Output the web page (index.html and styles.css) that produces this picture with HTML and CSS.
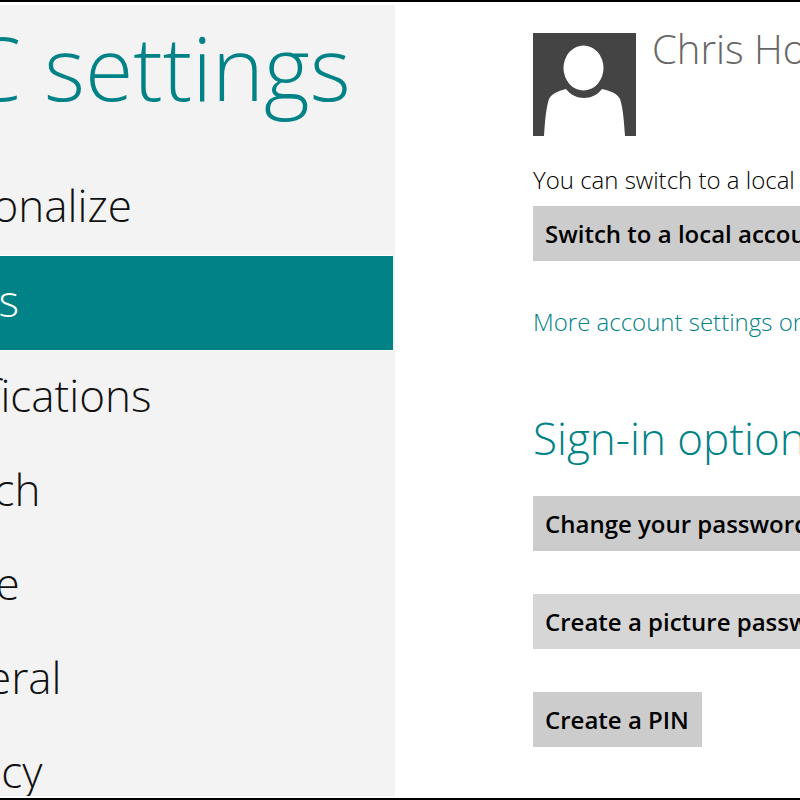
FILE: index.html
```
<!DOCTYPE html>
<html lang="en">
<head>
<meta charset="utf-8">
<title>PC settings</title>
<link rel="stylesheet" href="styles.css">
</head>
<body>
<div class="screen">
  <aside class="sidebar">
    <h1 class="title">PC settings</h1>
    <nav class="nav">
      <a class="item" href="#personalize">Personalize</a>
      <a class="item active" href="#users" aria-current="page">Users</a>
      <a class="item" href="#notifications">Notifications</a>
      <a class="item" href="#search">Search</a>
      <a class="item" href="#share">Share</a>
      <a class="item" href="#general">General</a>
      <a class="item" href="#privacy">Privacy</a>
    </nav>
  </aside>
  <main class="content">
    <section class="account">
      <div class="profile">
        <svg class="avatar" viewBox="0 0 103 103" aria-hidden="true">
          <path fill="#444" d="M0 0H103V103H92C91 88 90 75 87 66C84 60 77 58 69 56C60 68 42 68 33 56C26 58 19 60 16 66C13 75 12 88 11 103H0Z"/>
          <ellipse cx="50.500" cy="35" rx="20" ry="22.500" fill="#fff"/>
        </svg>
        <p class="name">Chris Ho</p>
      </div>
      <p class="hint">You can switch to a local</p>
      <button class="button" type="button">Switch to a local account</button>
      <a class="more" href="#more">More account settings on</a>
    </section>
    <section class="signin">
      <h2 class="heading">Sign-in options</h2>
      <button class="button" type="button">Change your password</button>
      <button class="button light" type="button">Create a picture password</button>
      <button class="button" type="button">Create a PIN</button>
    </section>
  </main>
</div>
</body>
</html>
```
FILE: styles.css
```
* { box-sizing: border-box; }
body {
  margin: 0;
  background: #fff;
  color: #222;
  font-family: "Open Sans", "Noto Sans", sans-serif;
}
h1, h2, p { margin: 0; font-weight: 300; white-space: nowrap; }
.screen {
  display: grid;
  grid-template-columns: 395px 1fr;
  height: 100vh;
  overflow: hidden;
  border: solid #000;
  border-width: 2px 0;
  padding: 3px 0 2px;
}
.sidebar { background: #f3f3f3; overflow: hidden; min-height: 0; }
.title {
  margin-left: -85px;
  font-size: 88px;
  line-height: 124px;
  color: #008287;
}
.nav { display: flex; flex-direction: column; margin: 32px 2px 0 0; }
.item {
  flex: none;
  padding-bottom: 6px;
  text-indent: -95px;
  font-size: 44px;
  font-weight: 300;
  line-height: 88px;
  color: #111;
  text-decoration: none;
}
.active {
  background: #008287;
  color: #fff;
  border: solid #fff;
  border-width: 1px 0;
}
.content { min-width: 0; min-height: 0; overflow: hidden; padding: 28px 0 0 138px; }
.account, .signin { display: flex; flex-direction: column; align-items: flex-start; }
.profile { display: flex; gap: 16px; }
.avatar { flex: none; width: 103px; height: 103px; }
.name { font-size: 40px; line-height: 32px; color: #666; }
.hint { margin-top: 26px; font-size: 24px; line-height: 36px; color: #000; }
.button {
  height: 55px;
  margin: 8px 0 0;
  padding: 0 13px 0 12px;
  border: 0;
  background: #ccc;
  color: #000;
  font: 600 24px/55px "Open Sans", "Noto Sans", sans-serif;
  white-space: nowrap;
}
.light { background: #d6d6d6; }
.more {
  margin-top: 43px;
  font-size: 24px;
  font-weight: 300;
  line-height: 36px;
  color: #008287;
  text-decoration: none;
  white-space: nowrap;
}
.signin { gap: 35px; }
.heading { margin: 70px 0 -13px; font-size: 44px; line-height: 56px; color: #008287; }
```
